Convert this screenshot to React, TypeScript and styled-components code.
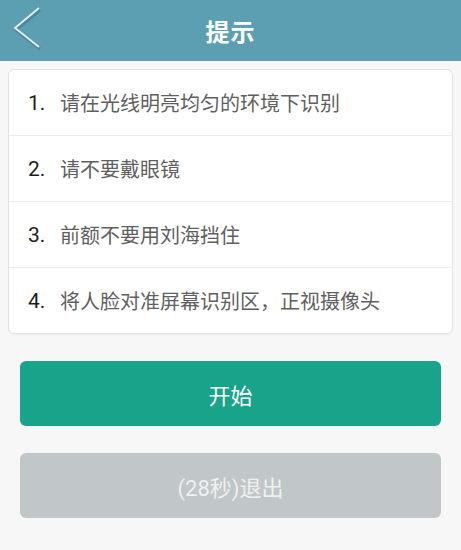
import React from 'react';
import styled, { createGlobalStyle } from 'styled-components';

const GlobalStyle = createGlobalStyle`
  html, body {
    margin: 0;
    padding: 0;
    background: #f7f7f7;
    font-family: Roboto, "Noto Sans CJK SC", sans-serif;
  }
`;

const Page = styled.div`
  width: 461px;
  height: 550px;
  background: #f7f7f7;
  display: flex;
  flex-direction: column;
`;

const Header = styled.header`
  position: relative;
  height: 61px;
  background: #5c9fb3;
  display: flex;
  align-items: center;
  justify-content: center;
`;

const BackButton = styled.button`
  position: absolute;
  left: 8px;
  top: 2px;
  width: 40px;
  height: 52px;
  padding: 0;
  border: none;
  background: transparent;
  display: flex;
  align-items: center;
  justify-content: center;
`;

const Title = styled.h1`
  margin: 0;
  color: #ffffff;
  font-family: "Noto Sans CJK SC", sans-serif;
  font-size: 24px;
  font-weight: 700;
  letter-spacing: 1px;
`;

const Card = styled.ul`
  list-style: none;
  margin: 8px 8px 0;
  padding: 0;
  background: #ffffff;
  border: 1px solid #e2e2e2;
  border-radius: 6px;
  box-shadow: 0 1px 1px rgba(0, 0, 0, 0.04);
`;

const Row = styled.li`
  box-sizing: border-box;
  height: 65px;
  display: flex;
  align-items: center;
  padding: 0 19px;
  & + & {
    height: 66px;
    border-top: 1px solid #ececec;
  }
`;

const Num = styled.span`
  width: 32px;
  color: #1c1c1c;
  font-size: 21px;
`;

const Tip = styled.span`
  color: #5f5f5f;
  font-size: 20px;
`;

const Actions = styled.div`
  display: flex;
  flex-direction: column;
  gap: 27px;
  padding: 27px 20px 0 20px;
`;

const ActionButton = styled.button<{ $tone: 'primary' | 'muted' }>`
  height: 65px;
  border: none;
  border-radius: 6px;
  font-family: inherit;
  font-size: 22px;
  background: ${(p) => (p.$tone === 'primary' ? '#17a48b' : '#c1c6c8')};
  color: ${(p) => (p.$tone === 'primary' ? '#ffffff' : '#eef0f1')};
`;

const tips = [
  '请在光线明亮均匀的环境下识别',
  '请不要戴眼镜',
  '前额不要用刘海挡住',
  '将人脸对准屏幕识别区，正视摄像头',
];

function App() {
  return (
    <Page>
      <GlobalStyle />
      <Header>
        <BackButton aria-label="back">
          <svg width="40" height="52" viewBox="0 0 40 52">
            <polyline points="31,6 7,26 31,45" fill="none" stroke="rgba(0,0,0,0.15)" strokeWidth="3" transform="translate(1,2)" />
            <polyline points="31,6 7,26 31,45" fill="none" stroke="#e4f1f4" strokeWidth="1.8" />
          </svg>
        </BackButton>
        <Title>提示</Title>
      </Header>
      <Card>
        {tips.map((t, i) => (
          <Row key={t}>
            <Num>{i + 1}.</Num>
            <Tip>{t}</Tip>
          </Row>
        ))}
      </Card>
      <Actions>
        <ActionButton $tone="primary">开始</ActionButton>
        <ActionButton $tone="muted">(28秒)退出</ActionButton>
      </Actions>
    </Page>
  );
}

export default App;
